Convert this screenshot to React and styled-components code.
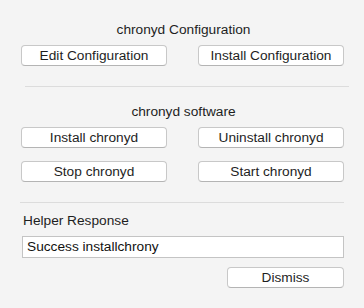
import React from "react";
import styled, { createGlobalStyle } from "styled-components";

const Global = createGlobalStyle`
  html, body { margin: 0; padding: 0; background: #f4f4f4; }
  body { font-family: "Liberation Sans", Arial, sans-serif; font-size: 13.7px; color: #1e1e1e; }
`;

const Window = styled.div`
  width: 364px;
  height: 308px;
  box-sizing: border-box;
  background: #f4f4f4;
  padding: 22px 20px 0 21px;
  display: flex;
  flex-direction: column;
`;

const SectionTitle = styled.div`
  text-align: center;
  line-height: 16px;
  height: 16px;
  padding-left: 2px;
  margin-top: ${(p) => p.$top || 0}px;
`;

const ButtonGrid = styled.div`
  display: grid;
  grid-template-columns: 146px 146px;
  justify-content: space-between;
  row-gap: 13px;
  margin-top: ${(p) => p.$top}px;
`;

const Button = styled.button`
  box-sizing: border-box;
  height: 21px;
  padding: 0;
  font-family: "Liberation Sans", Arial, sans-serif;
  font-size: 13.7px;
  color: #1e1e1e;
  background: #fff;
  border: 1px solid #c8c8c8;
  border-bottom-color: #b4b4b4;
  border-radius: 4px;
  line-height: 19px;
  text-align: center;
  width: ${(p) => (p.$width ? `${p.$width}px` : "auto")};
`;

const Separator = styled.hr`
  border: none;
  height: 1px;
  background: #dcdcdc;
  margin: ${(p) => p.$top}px ${(p) => p.$right}px 0 ${(p) => p.$left}px;
`;

const Label = styled.div`
  line-height: 16px;
  height: 16px;
  margin-top: ${(p) => p.$top}px;
  padding-left: 2px;
`;

const Field = styled.div`
  box-sizing: border-box;
  height: 22px;
  margin-top: 7px;
  margin-left: 1px;
  background: #fff;
  border: 1px solid #c4c4c4;
  padding: 0 4px;
  line-height: 20px;
  color: #111;
`;

const Footer = styled.div`
  display: flex;
  justify-content: flex-end;
  margin-top: 9px;
`;

export default function App() {
  return (
    <>
      <Global />
      <Window>
        <SectionTitle>chronyd Configuration</SectionTitle>
        <ButtonGrid $top={7}>
          <Button>Edit Configuration</Button>
          <Button>Install Configuration</Button>
        </ButtonGrid>
        <Separator $top={20} $left={4} $right={-5} />
        <SectionTitle $top={17}>chronyd software</SectionTitle>
        <ButtonGrid $top={7}>
          <Button>Install chronyd</Button>
          <Button>Uninstall chronyd</Button>
          <Button>Stop chronyd</Button>
          <Button>Start chronyd</Button>
        </ButtonGrid>
        <Separator $top={20} $left={-1} $right={0} />
        <Label $top={10}>Helper Response</Label>
        <Field>Success installchrony</Field>
        <Footer>
          <Button $width={117}>Dismiss</Button>
        </Footer>
      </Window>
    </>
  );
}
